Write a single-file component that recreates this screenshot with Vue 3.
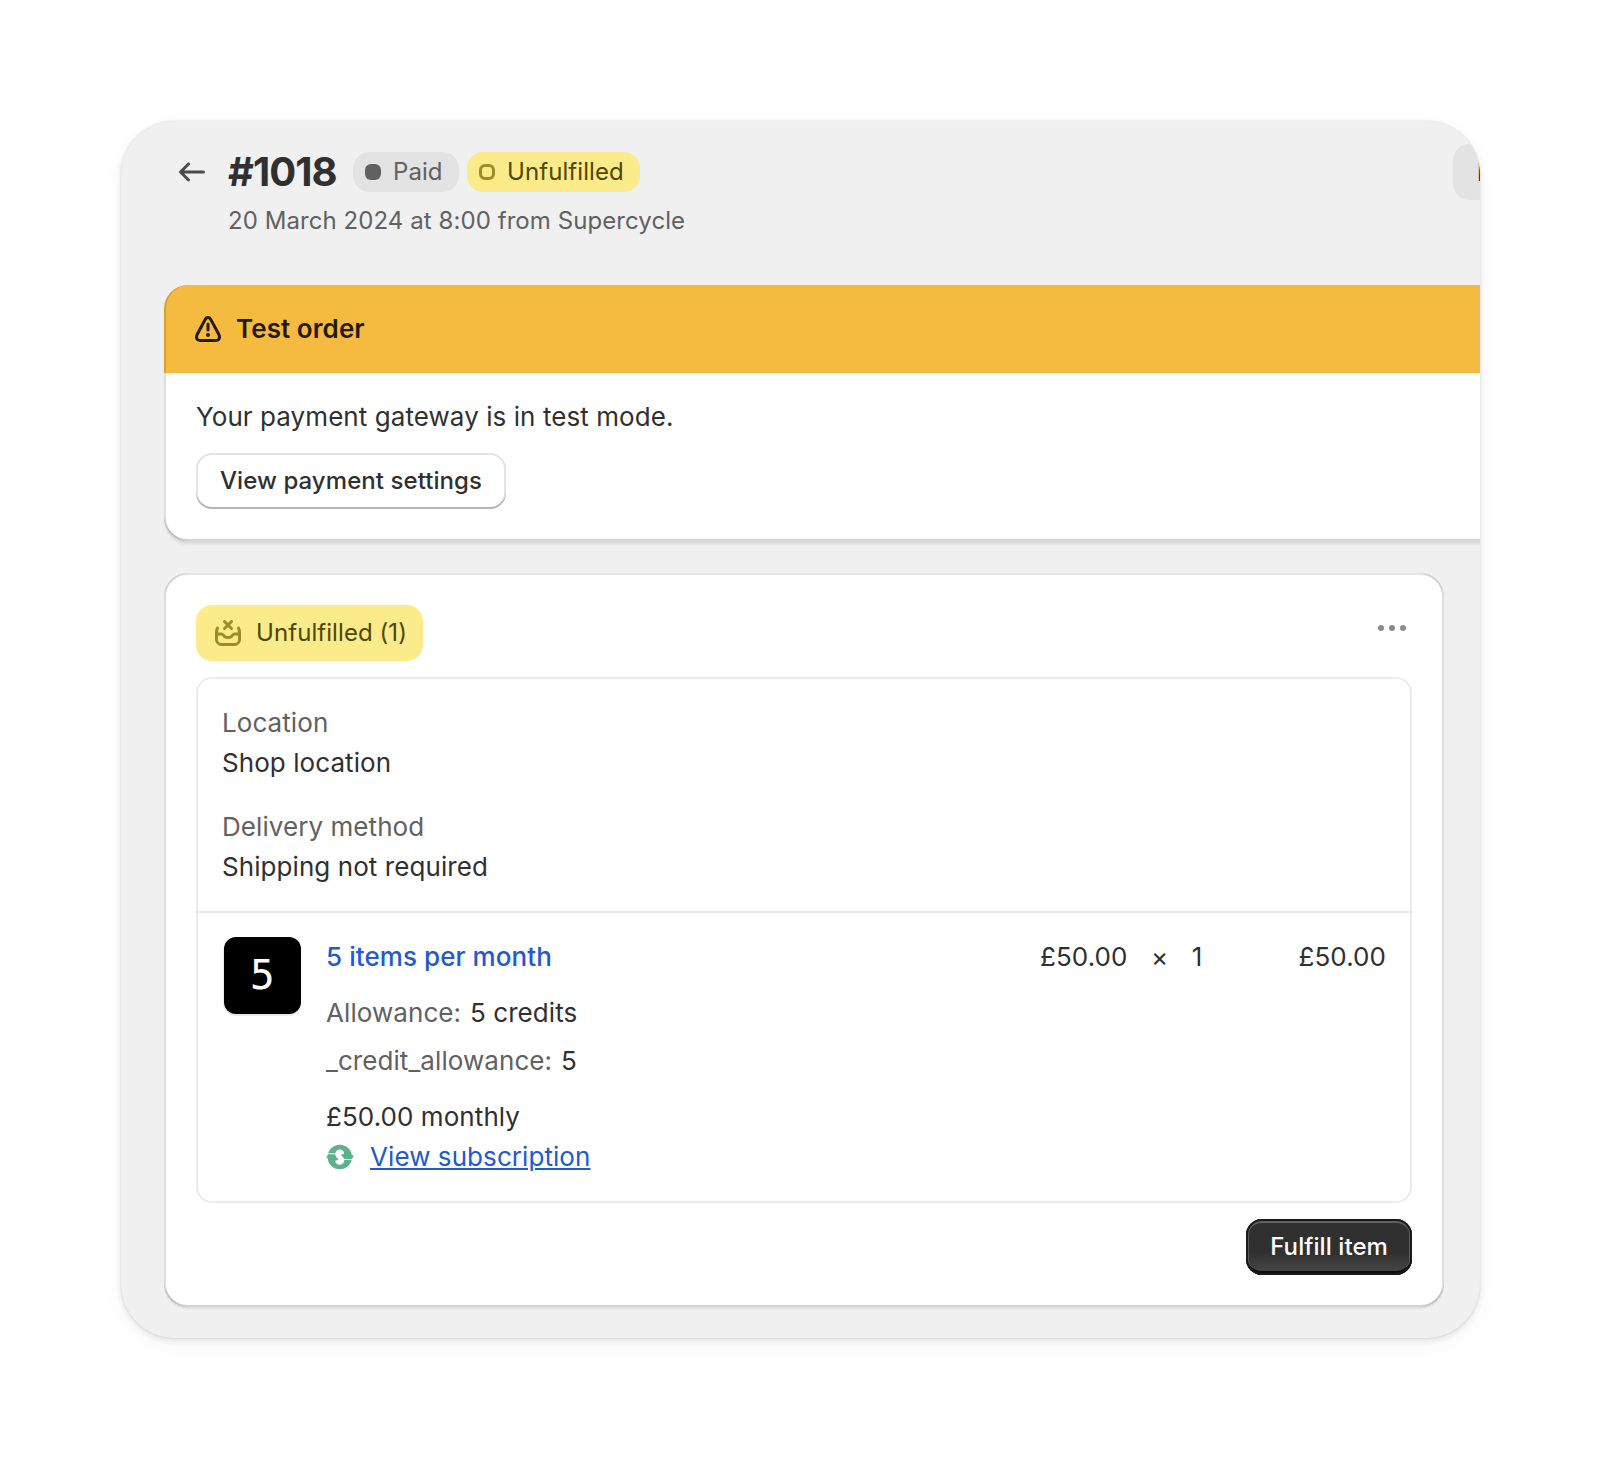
<template>
  <div class="page">
    <main class="window">
      <header class="order-header">
        <button class="back" aria-label="Back">
          <svg class="icon" viewBox="0 0 20 20" fill="currentColor">
            <path d="M16.5 10a.75.75 0 0 1-.75.75h-9.69l2.72 2.72a.75.75 0 0 1-1.06 1.06l-4-4a.75.75 0 0 1 0-1.06l4-4a.75.75 0 1 1 1.06 1.06l-2.72 2.72h9.69a.75.75 0 0 1 .75.75Z" />
          </svg>
        </button>
        <div class="heading">
          <div class="title-row">
            <h1>#1018</h1>
            <span class="badge">
              <i class="pip filled"></i>Paid
            </span>
            <span class="badge attention">
              <i class="pip"></i>Unfulfilled
            </span>
          </div>
          <p class="subtitle">20 March 2024 at 8:00 from Supercycle</p>
        </div>
        <button class="more-actions">More</button>
      </header>

      <section class="card banner">
        <div class="banner-title">
          <svg class="icon" viewBox="0 0 20 20" fill="none" stroke="currentColor" stroke-width="1.5" stroke-linecap="round" stroke-linejoin="round">
            <path d="M8.7 5.05 4.5 12.9c-.62 1.4-.1 2.85 1.35 2.85h8.3c1.45 0 1.97-1.45 1.35-2.85L11.3 5.05c-.6-1.07-2-1.07-2.6 0Z" />
            <path d="M10 7.5v3" />
            <circle cx="10" cy="13" r="1" fill="currentColor" stroke="none" />
          </svg>
          <h2>Test order</h2>
        </div>
        <div class="banner-body">
          <p>Your payment gateway is in test mode.</p>
          <button class="btn">View payment settings</button>
        </div>
      </section>

      <section class="card order">
        <div class="order-top">
          <span class="badge attention large">
            <svg class="icon" viewBox="0 0 20 20" fill="none" stroke="currentColor" stroke-width="1.5" stroke-linecap="round" stroke-linejoin="round">
              <path d="m8.25 4.25 3.5 3.5m0-3.5-3.5 3.5" />
              <path d="M4.75 7.5c-.35.7-.5 1.5-.5 2.4v3.35a2.5 2.5 0 0 0 2.5 2.5h6.5a2.5 2.5 0 0 0 2.5-2.5V9.900c0-.9-.15-1.7-.5-2.4" />
              <path d="M4.5 10.5h2.2c.4 0 .7.2.9.5.5.75 1.3 1.25 2.4 1.25s1.900-.5 2.400-1.250c.2-.3.5-.5.9-.5h2.200" />
            </svg>
            Unfulfilled (1)
          </span>
          <button class="dots" aria-label="Order actions">
            <i v-for="n in 3" :key="n"></i>
          </button>
        </div>

        <div class="box">
          <dl class="details">
            <div v-for="d in details" :key="d.label">
              <dt>{{ d.label }}</dt>
              <dd>{{ d.value }}</dd>
            </div>
          </dl>

          <div class="line-item">
            <div class="thumb"><span>5</span></div>
            <div class="info">
              <a class="product">5 items per month</a>
              <div class="props">
                <p v-for="p in itemProps" :key="p.label">
                  <span class="muted">{{ p.label }}:</span> {{ p.value }}
                </p>
              </div>
              <p>£50.00 monthly</p>
              <p class="subscription">
                <svg class="cycle" viewBox="0 0 28 26">
                  <circle cx="13.800" cy="13" r="12.200" fill="#5bb08d" />
                  <path fill="#5bb08d" d="M0 13.800 2.600 10H8v3.800ZM28 11.200 25.400 16H20v-4.800Z" />
                  <path fill="#fff" d="M9.300 9.800C9.300 7.300 11.300 5.600 13.700 5.600c2.200 0 4 1.300 4.400 3.300-.1 1-.8 1.200-1.800 1.300-.9.100-1.300.5-.9 1.300.5 1 2.900 1.500 2.900 4.500 0 2.800-2 4.800-4.600 4.800-2.200 0-4-1.300-4.400-3.300.1-1 .8-1.200 1.800-1.300.9-.1 1.300-.5.9-1.300-.5-1-2.700-1.900-2.700-5.100Z" />
                  <path stroke="#fff" stroke-width="1" d="M1.500 9.800h9M17 15.500h9.300" />
                </svg>
                <a>View subscription</a>
              </p>
            </div>
            <div class="price">
              <span>£50.00</span>
              <span>×</span>
              <span>1</span>
            </div>
            <div class="total">£50.00</div>
          </div>
        </div>

        <div class="footer">
          <button class="btn primary">Fulfill item</button>
        </div>
      </section>
    </main>
  </div>
</template>

<script setup>
const details = [
  { label: 'Location', value: 'Shop location' },
  { label: 'Delivery method', value: 'Shipping not required' }
]

const itemProps = [
  { label: 'Allowance', value: '5 credits' },
  { label: '_credit_allowance', value: '5' }
]
</script>

<style>
body {
  margin: 0;
  background: #fff;
}
</style>

<style scoped>
* {
  box-sizing: border-box;
}

.page {
  height: 1458px;
  padding: 121px 120px 120px 121px;
  background: #fff;
  font-family: Inter, sans-serif;
  font-size: 26px;
  line-height: 40px;
  letter-spacing: 0.07px;
  color: #303030;
}

.window {
  width: 1359px;
  height: 1217px;
  padding: 23px 0 0 43px;
  overflow: hidden;
  border-radius: 54px;
  background: #f0f0f0;
  box-shadow:
    0 0 2px rgba(0, 0, 0, 0.14),
    0 3px 6px rgba(0, 0, 0, 0.1),
    0 8px 30px rgba(0, 0, 0, 0.03);
}

h1, h2, p, dl, dd {
  margin: 0;
}

button {
  padding: 0;
  border: none;
  background: none;
  font-family: inherit;
  letter-spacing: inherit;
  color: inherit;
}

.icon {
  display: block;
  flex: none;
  width: 40px;
  height: 40px;
}

/* Header */
.order-header {
  display: flex;
  align-items: flex-start;
  height: 141px;
}

.back {
  margin: 8px 16px 0 8px;
  color: #4a4a4a;
}

.heading {
  flex: 1;
}

.title-row {
  display: flex;
  align-items: center;
  height: 56px;
}

h1 {
  width: 125px;
  font-size: 40px;
  font-weight: 700;
  line-height: 48px;
  letter-spacing: -1px;
}

.subtitle {
  margin-top: 1px;
  font-size: 24px;
  color: #616161;
}

.badge {
  display: flex;
  align-items: center;
  height: 40px;
  padding: 0 16.5px 0 12px;
  margin-right: 8px;
  border-radius: 16px;
  background: #e3e3e3;
  font-size: 24px;
  color: #616161;
  white-space: nowrap;
}

.badge.attention {
  background: #fbeb8a;
  color: #4f4700;
}

.pip {
  width: 16px;
  height: 16px;
  margin-right: 12px;
  border: 3px solid #998f26;
  border-radius: 6px;
}

.pip.filled {
  border: none;
  background: #616161;
}

.more-actions {
  width: 240px;
  height: 56px;
  margin-right: -213px;
  padding-left: 24px;
  border-radius: 16px;
  background: #e3e3e3;
  font-size: 24px;
  font-weight: 500;
  text-align: left;
}

/* Cards */
.card {
  position: relative;
  width: 1280px;
  border-radius: 24px;
  background: #fff;
  box-shadow: 0 2px 0 rgba(26, 26, 26, 0.07);
}

.card::after {
  content: '';
  position: absolute;
  inset: 0;
  border-radius: inherit;
  pointer-events: none;
  box-shadow:
    inset 2px 0 0 rgba(0, 0, 0, 0.13),
    inset -2px 0 0 rgba(0, 0, 0, 0.13),
    inset 0 -2px 0 rgba(0, 0, 0, 0.17),
    inset 0 2px 0 rgba(204, 204, 204, 0.5);
}

.banner {
  width: 1400px;
  height: 256px;
  margin-bottom: 32px;
  box-shadow:
    0 2px 0 rgba(26, 26, 26, 0.05),
    0 4px 2px rgba(26, 26, 26, 0.05);
}

.banner::after {
  box-shadow:
    inset 2px 0 0 rgba(0, 0, 0, 0.13),
    inset 0 -2px 0 rgba(0, 0, 0, 0.17),
    inset 0 1px 0 rgba(204, 204, 204, 0.4);
}

.banner-title {
  display: flex;
  align-items: center;
  gap: 8px;
  height: 88px;
  padding-left: 24px;
  border-radius: 24px 0 0;
  background: #f5bb41;
  color: #251a00;
}

h2 {
  font-size: 26px;
  font-weight: 600;
}

.banner-body {
  padding: 24px 32px;
}

.btn {
  display: block;
  height: 56px;
  padding: 0 24px 2px;
  margin-top: 16px;
  border-radius: 16px;
  background: #fff;
  box-shadow:
    inset 0 -2px 0 #b5b5b5,
    inset 0 0 0 2px #e3e3e3;
  font-size: 24px;
  font-weight: 500;
}

/* Fulfillment card */
.order {
  height: 734px;
  padding: 32px;
}

.order-top {
  display: flex;
  justify-content: space-between;
  height: 72px;
}

.badge.large {
  height: 56px;
  padding: 0 16px 0 12px;
  margin: 0;
}

.large .icon {
  margin-right: 8px;
  color: #998f26;
}

.dots {
  display: flex;
  gap: 5px;
  width: 34px;
  height: 6px;
  margin-top: 20px;
}

.dots i {
  width: 6px;
  height: 6px;
  border-radius: 50%;
  background: #8a8a8a;
}

.box {
  border: 2px solid #ebebeb;
  border-radius: 16px;
}

.details {
  display: flex;
  flex-direction: column;
  gap: 24px;
  padding: 24px;
}

dt,
.muted {
  color: #616161;
}

.muted {
  margin-right: 1.5px;
}

.line-item {
  display: flex;
  padding: 24px;
  border-top: 2px solid #ebebeb;
}

.thumb {
  display: flex;
  align-items: center;
  justify-content: center;
  width: 77px;
  height: 77px;
  margin: 0 25px 0 2px;
  border-radius: 12px;
  background: #000;
  box-shadow: 0 2px 0 #ebebeb, -1px 1px 0 #ebebeb;
  font-family: 'DejaVu Sans Mono', monospace;
  font-size: 41px;
  color: #fff;
}

.thumb span {
  margin-top: -2px;
}

.info {
  flex: 1;
}

.product {
  font-weight: 500;
  color: #2259d0;
}

.props {
  display: grid;
  gap: 8px;
  margin: 16px 0;
}

.subscription {
  display: flex;
  align-items: center;
}

.subscription a {
  color: #2259d0;
  text-decoration: underline;
}

.cycle {
  width: 28px;
  height: 26px;
  margin-right: 16px;
}

.price {
  display: flex;
  gap: 23.5px;
  width: 163px;
}

.total {
  width: 183px;
  text-align: right;
}

.footer {
  display: flex;
  justify-content: flex-end;
}

.btn.primary {
  background: linear-gradient(#303030 60%, #4a4a4a);
  box-shadow:
    inset 0 0 0 2px #1a1a1a,
    inset 0 -4px 0 #0d0d0d,
    inset 0 4px 0 #616161,
    inset 0 0 0 3px #5a5a5a;
  color: #fff;
}
</style>
